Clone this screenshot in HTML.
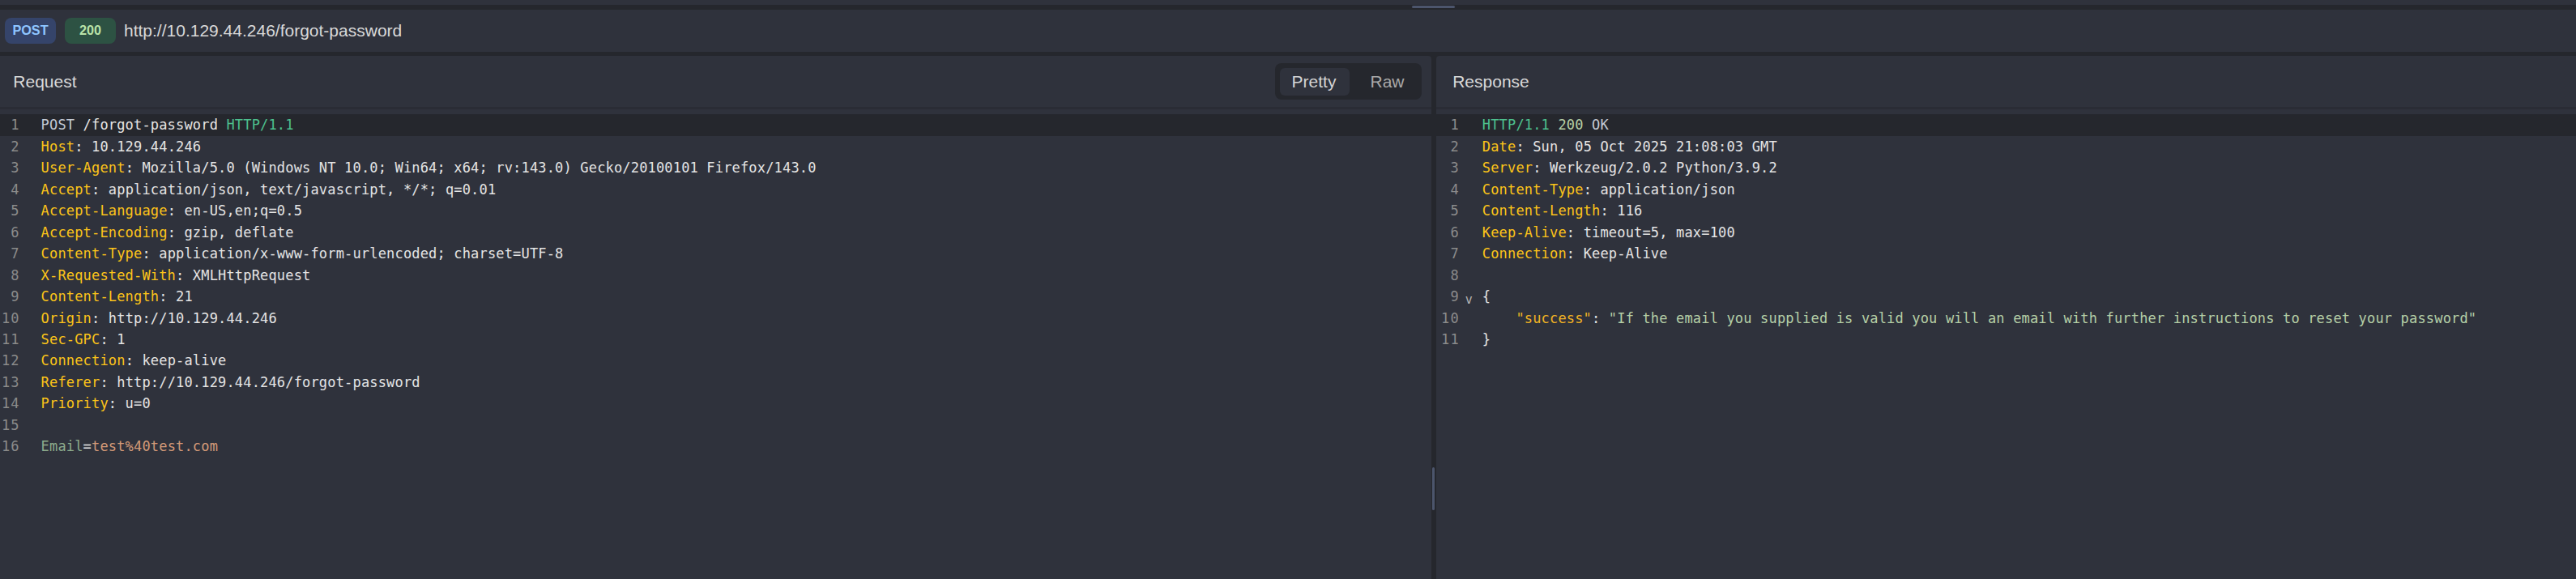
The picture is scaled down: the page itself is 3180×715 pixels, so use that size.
<!DOCTYPE html>
<html lang="en"><head><meta charset="utf-8"><title>Request / Response</title>
<style>
html,body{margin:0;padding:0}
body{width:3180px;height:715px;overflow:hidden;position:relative;background:#25272d;font-family:"Liberation Sans",Arial,sans-serif;color:#d6d6d6}
.abs{position:absolute}
.top{left:0;top:0;width:3180px;height:6px;background:#2f323c}
.hh{left:1743px;top:7px;width:53px;height:3px;border-radius:2px;background:#4c556c}
.vh{left:1768px;top:577px;width:3px;height:53px;border-radius:2px;background:#4c556c}
.url{left:0;top:12px;width:3180px;height:52px;background:#2f323c}
.badge{position:absolute;top:10px;height:32px;width:63px;border-radius:8px;font-weight:bold;font-size:16.25px;line-height:30px;text-align:center}
.b1{left:6px;background:#35446a;color:#8ec5ff}
.b2{left:80px;background:#2d5243;color:#b9e3a8}
.urltx{position:absolute;left:153px;top:0;height:52px;line-height:52px;font-size:21px;color:#d9d9d9;white-space:pre}
.panel{top:69px;height:646px;background:#2f323c;overflow:hidden}
.req{left:-5px;width:1772px;border-radius:4px 4px 0 0}
.res{left:1773px;width:1412px;border-radius:4px 4px 0 0}
.title{position:absolute;left:20.2px;top:0;height:63px;line-height:63px;font-size:21px;color:#d9d9d9}
.req .title{left:21.3px}
.sep{position:absolute;left:0;right:0;top:63px;height:3px;background:#2a2c35}
.tog{position:absolute;left:1579px;top:9px;width:181px;height:45px;border-radius:8px;background:#25272d}
.tog span{position:absolute;top:6px;height:34px;line-height:34px;font-size:21px;text-align:center;border-radius:6px}
.tog .on{left:6px;width:86px;text-indent:-2px;background:#2f323c;color:#d4d4d4}
.tog .off{left:98.5px;width:80px;color:#a9a9a9}
.ed{position:absolute;left:0;right:0;top:72px;font-family:"DejaVu Sans Mono","Liberation Mono",monospace;font-size:17.0px;letter-spacing:0.167px}
.ln{height:26.4px;line-height:26.4px;position:absolute;left:0;right:0}
.ln.act{background:#25272d;height:26.5px}
.no{position:absolute;left:0;top:0;text-align:right;color:#8b8b8b;letter-spacing:1.2px}
.tx{position:absolute;top:0;white-space:pre}
.req .no{width:29.8px} .req .tx{left:55.6px}
.res .no{width:28.9px} .res .tx{left:56.8px}
.fold{position:absolute;left:35.8px;top:3.5px;color:#b4b4b4;font-size:15px;letter-spacing:0}
.k{color:#fcc419} .p{color:#e4e4e4} .v{color:#e4e4e4} .m{color:#c3cad4} .g{color:#4dc08e}
.s{color:#b5cfa6} .jk{color:#f0b323} .fk{color:#8dab8c} .fv{color:#d39a78}
</style></head>
<body>
<div class="abs top"></div>
<div class="abs hh"></div>
<div class="abs url"><span class="badge b1">POST</span><span class="badge b2">200</span><span class="urltx">http://10.129.44.246/forgot-password</span></div>
<div class="abs panel req">
<div class="title">Request</div>
<div class="tog"><span class="on">Pretty</span><span class="off">Raw</span></div>
<div class="sep"></div>
<div class="ed">
<div class="ln act" style="top:0px"><span class="no">1</span><span class="tx"><span class="m">POST</span><span class="v"> /forgot-password </span><span class="g">HTTP/1.1</span></span></div>
<div class="ln" style="top:27px"><span class="no">2</span><span class="tx"><span class="k">Host</span><span class="p">:</span><span class="v"> 10.129.44.246</span></span></div>
<div class="ln" style="top:53px"><span class="no">3</span><span class="tx"><span class="k">User-Agent</span><span class="p">:</span><span class="v"> Mozilla/5.0 (Windows NT 10.0; Win64; x64; rv:143.0) Gecko/20100101 Firefox/143.0</span></span></div>
<div class="ln" style="top:80px"><span class="no">4</span><span class="tx"><span class="k">Accept</span><span class="p">:</span><span class="v"> application/json, text/javascript, */*; q=0.01</span></span></div>
<div class="ln" style="top:106px"><span class="no">5</span><span class="tx"><span class="k">Accept-Language</span><span class="p">:</span><span class="v"> en-US,en;q=0.5</span></span></div>
<div class="ln" style="top:133px"><span class="no">6</span><span class="tx"><span class="k">Accept-Encoding</span><span class="p">:</span><span class="v"> gzip, deflate</span></span></div>
<div class="ln" style="top:159px"><span class="no">7</span><span class="tx"><span class="k">Content-Type</span><span class="p">:</span><span class="v"> application/x-www-form-urlencoded; charset=UTF-8</span></span></div>
<div class="ln" style="top:186px"><span class="no">8</span><span class="tx"><span class="k">X-Requested-With</span><span class="p">:</span><span class="v"> XMLHttpRequest</span></span></div>
<div class="ln" style="top:212px"><span class="no">9</span><span class="tx"><span class="k">Content-Length</span><span class="p">:</span><span class="v"> 21</span></span></div>
<div class="ln" style="top:239px"><span class="no">10</span><span class="tx"><span class="k">Origin</span><span class="p">:</span><span class="v"> http://10.129.44.246</span></span></div>
<div class="ln" style="top:265px"><span class="no">11</span><span class="tx"><span class="k">Sec-GPC</span><span class="p">:</span><span class="v"> 1</span></span></div>
<div class="ln" style="top:291px"><span class="no">12</span><span class="tx"><span class="k">Connection</span><span class="p">:</span><span class="v"> keep-alive</span></span></div>
<div class="ln" style="top:318px"><span class="no">13</span><span class="tx"><span class="k">Referer</span><span class="p">:</span><span class="v"> http://10.129.44.246/forgot-password</span></span></div>
<div class="ln" style="top:344px"><span class="no">14</span><span class="tx"><span class="k">Priority</span><span class="p">:</span><span class="v"> u=0</span></span></div>
<div class="ln" style="top:371px"><span class="no">15</span><span class="tx"></span></div>
<div class="ln" style="top:397px"><span class="no">16</span><span class="tx"><span class="fk">Email</span><span class="v">=</span><span class="fv">test%40test.com</span></span></div>
</div>
</div>
<div class="abs panel res">
<div class="title">Response</div>
<div class="sep"></div>
<div class="ed">
<div class="ln act" style="top:0px"><span class="no">1</span><span class="tx"><span class="g">HTTP/1.1</span> <span class="s">200</span><span class="m"> OK</span></span></div>
<div class="ln" style="top:27px"><span class="no">2</span><span class="tx"><span class="k">Date</span><span class="p">:</span><span class="v"> Sun, 05 Oct 2025 21:08:03 GMT</span></span></div>
<div class="ln" style="top:53px"><span class="no">3</span><span class="tx"><span class="k">Server</span><span class="p">:</span><span class="v"> Werkzeug/2.0.2 Python/3.9.2</span></span></div>
<div class="ln" style="top:80px"><span class="no">4</span><span class="tx"><span class="k">Content-Type</span><span class="p">:</span><span class="v"> application/json</span></span></div>
<div class="ln" style="top:106px"><span class="no">5</span><span class="tx"><span class="k">Content-Length</span><span class="p">:</span><span class="v"> 116</span></span></div>
<div class="ln" style="top:133px"><span class="no">6</span><span class="tx"><span class="k">Keep-Alive</span><span class="p">:</span><span class="v"> timeout=5, max=100</span></span></div>
<div class="ln" style="top:159px"><span class="no">7</span><span class="tx"><span class="k">Connection</span><span class="p">:</span><span class="v"> Keep-Alive</span></span></div>
<div class="ln" style="top:186px"><span class="no">8</span><span class="tx"></span></div>
<div class="ln" style="top:212px"><span class="no">9</span><span class="fold">v</span><span class="tx"><span class="v">{</span></span></div>
<div class="ln" style="top:239px"><span class="no">10</span><span class="tx">    <span class="jk">"success"</span><span class="v">: </span><span class="s">"If the email you supplied is valid you will an email with further instructions to reset your password"</span></span></div>
<div class="ln" style="top:265px"><span class="no">11</span><span class="tx"><span class="v">}</span></span></div>
</div>
</div>
<div class="abs vh"></div>
</body></html>
